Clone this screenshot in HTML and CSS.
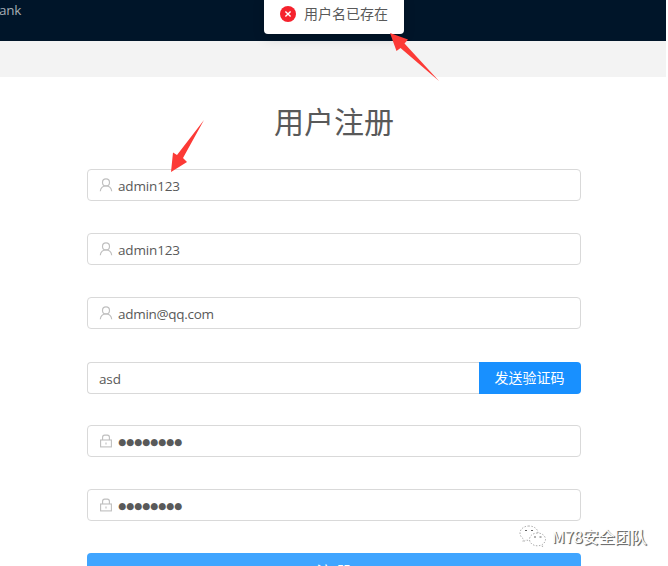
FILE: index.html
```html
<!DOCTYPE html>
<html lang="zh-CN">
<head>
<meta charset="utf-8">
<title>用户注册</title>
<link rel="stylesheet" href="styles.css">
</head>
<body>
<svg class="defs" width="0" height="0">
  <symbol id="user" viewBox="0 0 14 14"><g fill="none" stroke="#bfbfbf" stroke-width="1.15"><circle cx="7" cy="4.4" r="3.5"/><path d="M1.3 13.3C1.6 10.1 3.8 8 7 8s5.4 2.1 5.7 5.3"/></g></symbol>
  <symbol id="lock" viewBox="0 0 14 14"><g fill="none" stroke="#bfbfbf" stroke-width="1.1"><rect x="1.6" y="6" width="10.8" height="6.9"/><path d="M3.6 6V3.2Q3.6 1.1 5.6 1.1h2.8q2 0 2 2.1V6M7 8.6v2"/></g></symbol>
</svg>
<div class="page">
  <header class="header"><span class="brand">ank</span></header>
  <main class="content">
    <h1 class="title">用户注册</h1>
    <form class="form">
      <div class="field"><svg class="icon"><use href="#user"/></svg><span class="value">admin123</span></div>
      <div class="field"><svg class="icon"><use href="#user"/></svg><span class="value">admin123</span></div>
      <div class="field"><svg class="icon"><use href="#user"/></svg><span class="value mail">admin@qq.com</span></div>
      <div class="code-row">
        <div class="field code"><span class="value">asd</span></div>
        <button class="send" type="button">发送验证码</button>
      </div>
      <div class="field"><svg class="icon"><use href="#lock"/></svg><span class="value dots">●●●●●●●●</span></div>
      <div class="field"><svg class="icon"><use href="#lock"/></svg><span class="value dots">●●●●●●●●</span></div>
      <button class="submit" type="button">注 册</button>
    </form>
  </main>
  <div class="toast">
    <svg width="16" height="16" viewBox="0 0 16 16"><circle cx="8" cy="8" r="8" fill="#f5222d"/><path d="M5.4 5.4l5.2 5.2M10.6 5.4l-5.2 5.2" stroke="#fff" stroke-width="1.4"/></svg>
    <span class="message">用户名已存在</span>
  </div>
  <svg class="arrows" viewBox="0 0 668 566">
    <path fill="#fc3a36" d="M390 33L408 39.5L404.5 43.5L439 81L400.5 48L396.5 51ZM204 120L183 158L187 162L171 172L173 152.500L177 155Z"/>
  </svg>
  <div class="watermark">
    <svg width="28" height="24" viewBox="0 0 28 24"><g fill="#fff" stroke="#999" stroke-width=".8" stroke-dasharray="1.5 1.5"><path d="M10 2C4.800 2 1 5.200 1 9c0 2.500 1.300 4.500 3.500 6L4 18l3-2c1 .3 2 .4 3 .4 5 0 9-3.200 9-7.300S15 2 10 2Z"/><path d="M18.500 9c-4.500 0-8 2.800-8 6.400s3.500 6.400 8 6.400c1 0 2-.2 2.800-.4l2.800 1.300-.8-2.300c2-1.200 3.200-3 3.200-5 0-3.600-3.500-6.400-8-6.400Z"/></g><path d="M6 6.500h2M12 6.500h2M15 13h2M20.500 13h2" stroke="#666"/></svg>
    <span>M78安全团队</span>
  </div>
</div>
</body>
</html>
```
FILE: styles.css
```css
* { box-sizing: border-box; }
body { margin: 0; background: #fff; font-family: "Open Sans", "Noto Sans CJK SC", sans-serif; font-size: 14px; color: #595959; }
.defs { position: absolute; }
.page { position: relative; width: 668px; height: 566px; overflow: hidden; }
.header { width: 666px; height: 41px; background: #001529; color: #a6adb4; line-height: 20px; }
.brand { margin-left: -1px; font-size: 13.500px; letter-spacing: -.3px; }
.content { width: 666px; border-top: 36px solid #f3f3f3; padding: 21px 85px 0 87px; }
.title { margin: 0; height: 71px; line-height: 44px; font-family: "Noto Sans CJK SC", sans-serif; font-size: 30px; font-weight: 400; text-align: center; }
.form { display: flex; flex-direction: column; gap: 32px; }
.field { display: flex; align-items: center; height: 32px; padding: 0 11px; border: 1px solid #d9d9d9; border-radius: 4px; background: #fff; }
.icon { width: 14px; height: 14px; margin-right: 5px; }
.value { line-height: 20px; padding-top: 2px; font-size: 13.5px; letter-spacing: -.15px; }
.mail { letter-spacing: -.28px; }
.dots { font-family: "DejaVu Sans", sans-serif; font-size: 9.2px; letter-spacing: 0; }
.code-row { display: flex; height: 32px; margin: 1px 0 -1px; }
.code { flex: 1; border-right: 0; border-radius: 4px 0 0 4px; }
.send { width: 102px; padding: 0 1px 0 0; border: 0; border-radius: 0 4px 4px 0; background: #1890ff; color: #fff; font: 400 14px/30px "Noto Sans CJK SC", sans-serif; }
.send, .submit { display: flex; justify-content: center; align-items: flex-start; }
.submit { height: 40px; padding: 0; border: 0; border-radius: 4px; background: #40a5ff; color: #fff; font: 400 16px/37px "Noto Sans CJK SC", sans-serif; }
.toast { position: absolute; left: 264px; top: -6px; width: 140px; height: 40px; display: flex; align-items: center; gap: 8px; padding-left: 16px; border-radius: 4px; background: #fff; box-shadow: 0 4px 12px rgba(0, 0, 0, .15); font-family: "Noto Sans CJK SC", sans-serif; }
.message { padding-bottom: 2px; }
.arrows { position: absolute; left: 0; top: 0; width: 668px; height: 566px; }
.watermark { position: absolute; left: 519px; top: 524px; display: flex; align-items: center; gap: 5px; color: #fff; font: 400 16px/24px "Noto Sans CJK SC", sans-serif; white-space: nowrap; text-shadow: 1px 1px 1px #777, 1px 1px 0 #555; }
```
